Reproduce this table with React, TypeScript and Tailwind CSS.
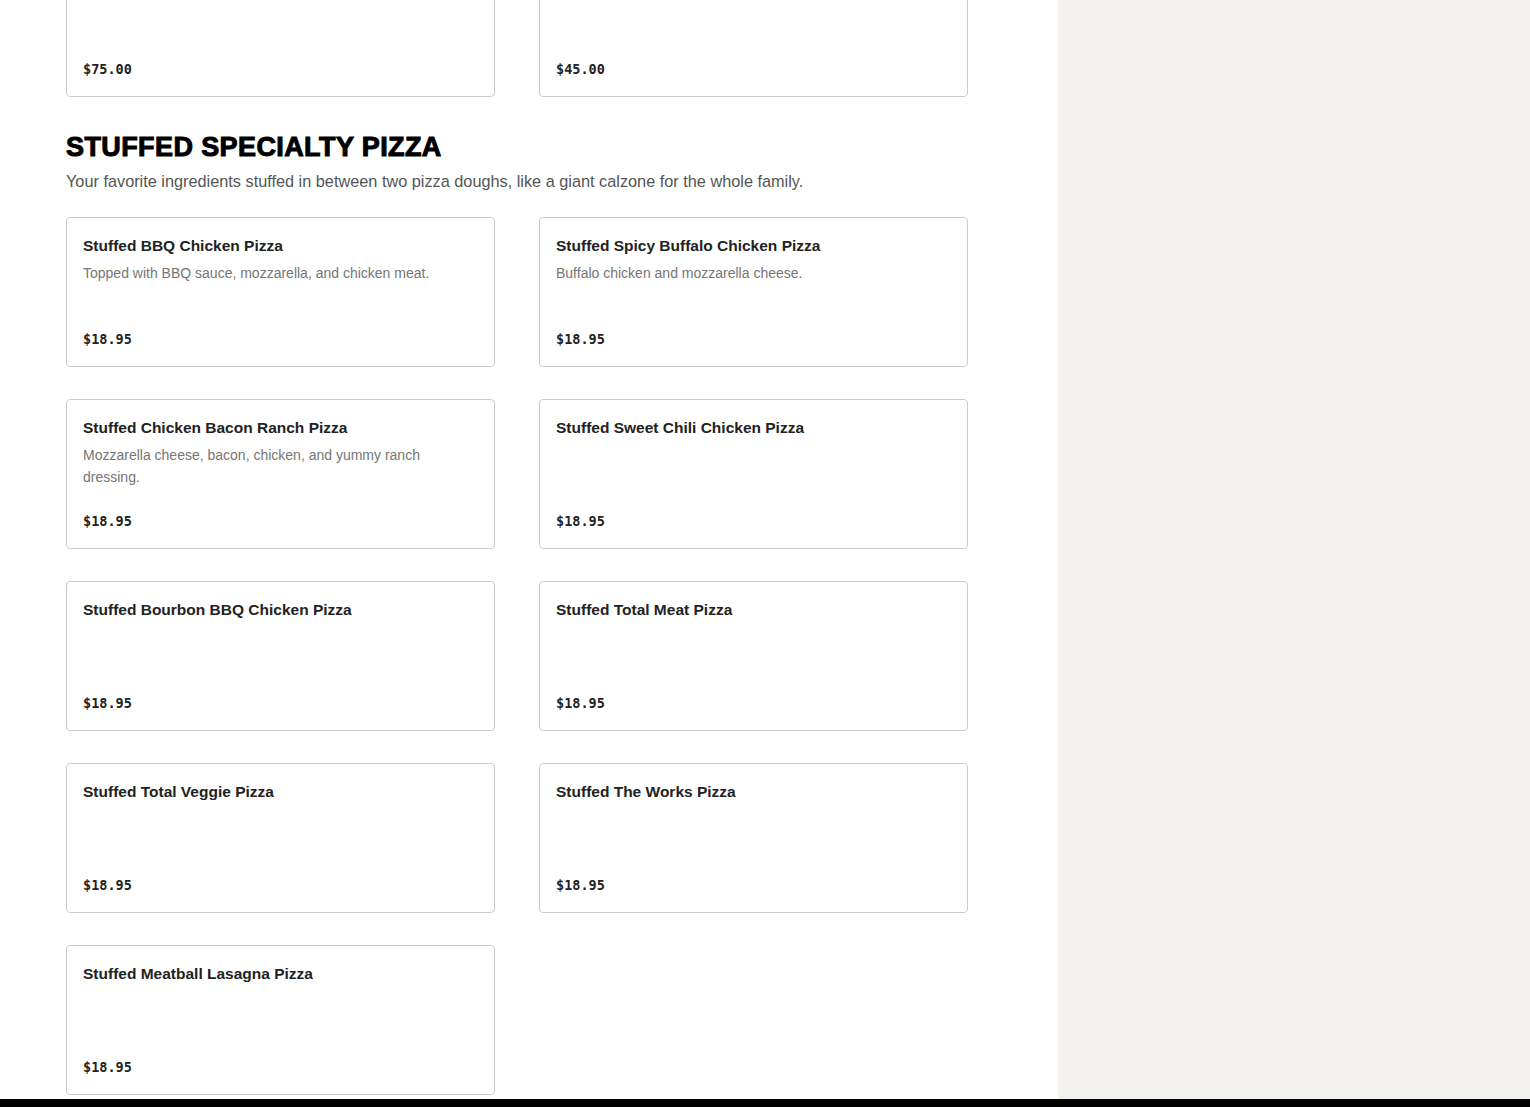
import React from 'react';

type Item = {
  name?: string;
  description?: string;
  price: string;
};

const topRow: Item[] = [{ price: '$75.00' }, { price: '$45.00' }];

const stuffedItems: Item[] = [
  { name: 'Stuffed BBQ Chicken Pizza', description: 'Topped with BBQ sauce, mozzarella, and chicken meat.', price: '$18.95' },
  { name: 'Stuffed Spicy Buffalo Chicken Pizza', description: 'Buffalo chicken and mozzarella cheese.', price: '$18.95' },
  { name: 'Stuffed Chicken Bacon Ranch Pizza', description: 'Mozzarella cheese, bacon, chicken, and yummy ranch dressing.', price: '$18.95' },
  { name: 'Stuffed Sweet Chili Chicken Pizza', price: '$18.95' },
  { name: 'Stuffed Bourbon BBQ Chicken Pizza', price: '$18.95' },
  { name: 'Stuffed Total Meat Pizza', price: '$18.95' },
  { name: 'Stuffed Total Veggie Pizza', price: '$18.95' },
  { name: 'Stuffed The Works Pizza', price: '$18.95' },
  { name: 'Stuffed Meatball Lasagna Pizza', price: '$18.95' },
];

const MenuCard: React.FC<{ item: Item }> = ({ item }) => (
  <div className="h-[150px] flex flex-col justify-between border border-[#cccccc] rounded-[4px] bg-white p-4">
    <div>
      {item.name && (
        <h3 className="text-[15.5px] leading-6 font-bold text-[#222222]">{item.name}</h3>
      )}
      {item.description && (
        <p className="mt-1 text-[14px] leading-[22px] text-[#767676]">{item.description}</p>
      )}
    </div>
    <p className="font-['DejaVu_Sans_Mono',monospace] text-[13.5px] leading-[20px] mb-[1px] font-bold text-[#222222]">
      {item.price}
    </p>
  </div>
);

const App: React.FC = () => {
  return (
    <div className="w-full bg-white font-['Liberation_Sans',Arial,sans-serif]">
      <div className="flex">
        {/* Menu column */}
        <main className="w-[1058px] shrink-0 pl-[66px] pb-1">
          <div className="w-[902px]">
            {/* previous category, tail end */}
            <div className="grid grid-cols-2 gap-x-[44px] -mt-[53px]">
              {topRow.map((item, i) => (
                <MenuCard key={i} item={item} />
              ))}
            </div>

            {/* Stuffed Specialty Pizza */}
            <section className="mt-[33px]">
              <h2 className="font-black text-[27px] leading-[34px] tracking-[0.4px] text-black [-webkit-text-stroke:1px_black]">
                STUFFED SPECIALTY PIZZA
              </h2>
              <p className="mt-[5px] text-[16.3px] leading-6 text-[#555555]">
                Your favorite ingredients stuffed in between two pizza doughs, like a giant calzone for the whole family.
              </p>
              <div className="mt-6 grid grid-cols-2 gap-x-[44px] gap-y-8">
                {stuffedItems.map((item) => (
                  <MenuCard key={item.name} item={item} />
                ))}
              </div>
            </section>
          </div>
        </main>

        {/* Side panel */}
        <aside className="flex-1 bg-[#f3f2ee]"></aside>
      </div>
      <footer className="h-24 bg-black"></footer>
    </div>
  );
};

export default App;
